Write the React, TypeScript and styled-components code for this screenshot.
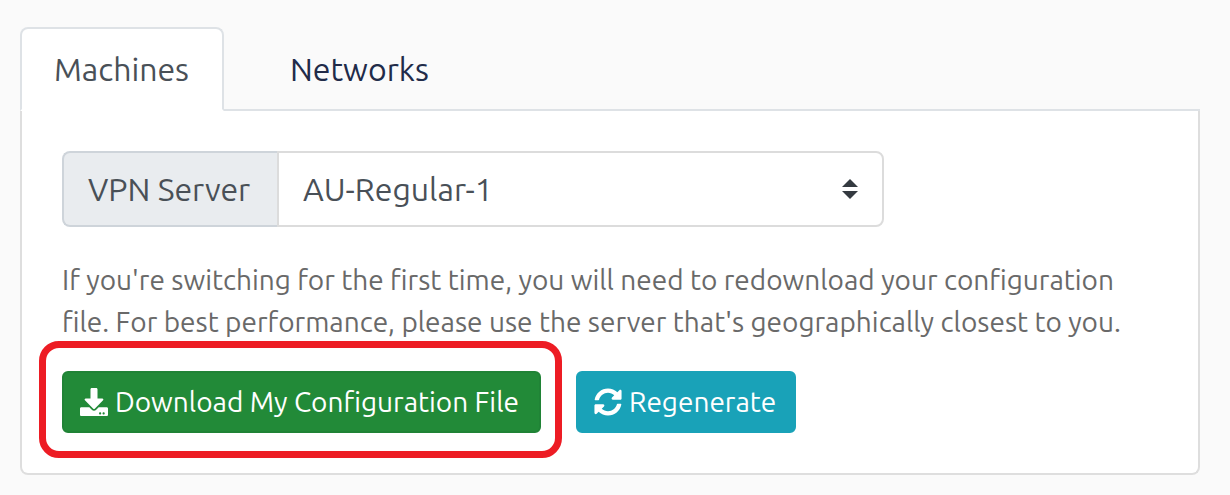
import React, { useState } from "react";
import styled, { createGlobalStyle } from "styled-components";
import { FaDownload, FaSyncAlt } from "react-icons/fa";

const GlobalStyle = createGlobalStyle`
  *, *::before, *::after { box-sizing: border-box; }
  body {
    margin: 0;
    background: #fafafa;
    color: #495057;
    font-family: Ubuntu, "Noto Sans", sans-serif;
    font-size: 32px;
    line-height: 48px;
  }
`;

const Page = styled.main`
  padding: 27px 30px 20px 20px;
`;

const Tabs = styled.div`
  display: flex;
  border-bottom: 2px solid #dee2e6;
`;

const Tab = styled.button<{ $active: boolean }>`
  min-width: 204px;
  margin-bottom: -2px;
  padding: 16px 32px;
  border: 2px solid;
  border-color: ${(p) => (p.$active ? "#dee2e6 #dee2e6 #fff" : "transparent")};
  border-radius: 8px 8px 0 0;
  background: ${(p) => (p.$active ? "#fff" : "transparent")};
  color: ${(p) => (p.$active ? "#495057" : "#212b49")};
  font: inherit;
  text-align: left;
  cursor: pointer;

  & + & {
    margin-left: 32px;
  }
`;

const Card = styled.section`
  padding: 40px;
  border: 2px solid #dedede;
  border-top: 0;
  border-radius: 0 0 8px 8px;
  background: #fff;
`;

const InputGroup = styled.div`
  display: flex;
  width: 75%;
  height: 76px;
`;

const GroupLabel = styled.label`
  display: flex;
  align-items: center;
  min-width: 215px;
  padding: 0 24px;
  border: 2px solid #ced4da;
  border-right: 0;
  border-radius: 8px 0 0 8px;
  background: #e9ecef;
`;

const SelectWrap = styled.div`
  position: relative;
  flex: 1;
`;

const Select = styled.select`
  width: 100%;
  height: 100%;
  padding: 0 64px 0 24px;
  border: 2px solid #dcdcdc;
  border-radius: 0 8px 8px 0;
  background: #fff;
  color: #495057;
  font: inherit;
  appearance: none;
`;

const Carets = styled.svg`
  position: absolute;
  top: 28px;
  right: 26px;
  pointer-events: none;
`;

const Help = styled.p`
  margin: 32px 0 28px;
  color: #696969;
  font-size: 28px;
  line-height: 42px;
`;

const Actions = styled.div`
  display: flex;
  gap: 35px;
`;

const Highlighted = styled.div`
  position: relative;

  &::after {
    content: "";
    position: absolute;
    inset: -30px -21px -25px -23px;
    border: 7px solid #ed1c24;
    border-radius: 20px;
    pointer-events: none;
  }
`;

const Button = styled.button<{ $color: string; $edge: string; $minWidth: number }>`
  display: flex;
  align-items: center;
  gap: 7px;
  min-width: ${(p) => p.$minWidth}px;
  height: 62px;
  padding: 0 16px;
  border: 2px solid ${(p) => p.$edge};
  border-radius: 6px;
  background: ${(p) => p.$color};
  color: #fff;
  font: inherit;
  font-size: 28px;
  white-space: nowrap;
  cursor: pointer;
`;

const tabs = ["Machines", "Networks"];

export default function App() {
  const [active, setActive] = useState(tabs[0]);

  return (
    <Page>
      <GlobalStyle />
      <Tabs role="tablist">
        {tabs.map((name) => (
          <Tab
            key={name}
            type="button"
            role="tab"
            aria-selected={active === name}
            $active={active === name}
            onClick={() => setActive(name)}
          >
            {name}
          </Tab>
        ))}
      </Tabs>
      <Card>
        <InputGroup>
          <GroupLabel htmlFor="server">VPN Server</GroupLabel>
          <SelectWrap>
            <Select id="server" defaultValue="AU-Regular-1">
              <option>AU-Regular-1</option>
            </Select>
            <Carets width="16" height="20" viewBox="0 0 4 5" aria-hidden="true">
              <path fill="#343a40" d="M2 0L0 2h4zm0 5L0 3h4z" />
            </Carets>
          </SelectWrap>
        </InputGroup>
        <Help>
          If you're switching for the first time, you will need to redownload your configuration
          file. For best performance, please use the server that's geographically closest to you.
        </Help>
        <Actions>
          <Highlighted>
            <Button type="button" $color="#228a38" $edge="#208336" $minWidth={479}>
              <FaDownload size={28} aria-hidden="true" />
              Download My Configuration File
            </Button>
          </Highlighted>
          <Button type="button" $color="#19a2b8" $edge="#19a2b8" $minWidth={220}>
            <FaSyncAlt size={28} aria-hidden="true" />
            Regenerate
          </Button>
        </Actions>
      </Card>
    </Page>
  );
}
